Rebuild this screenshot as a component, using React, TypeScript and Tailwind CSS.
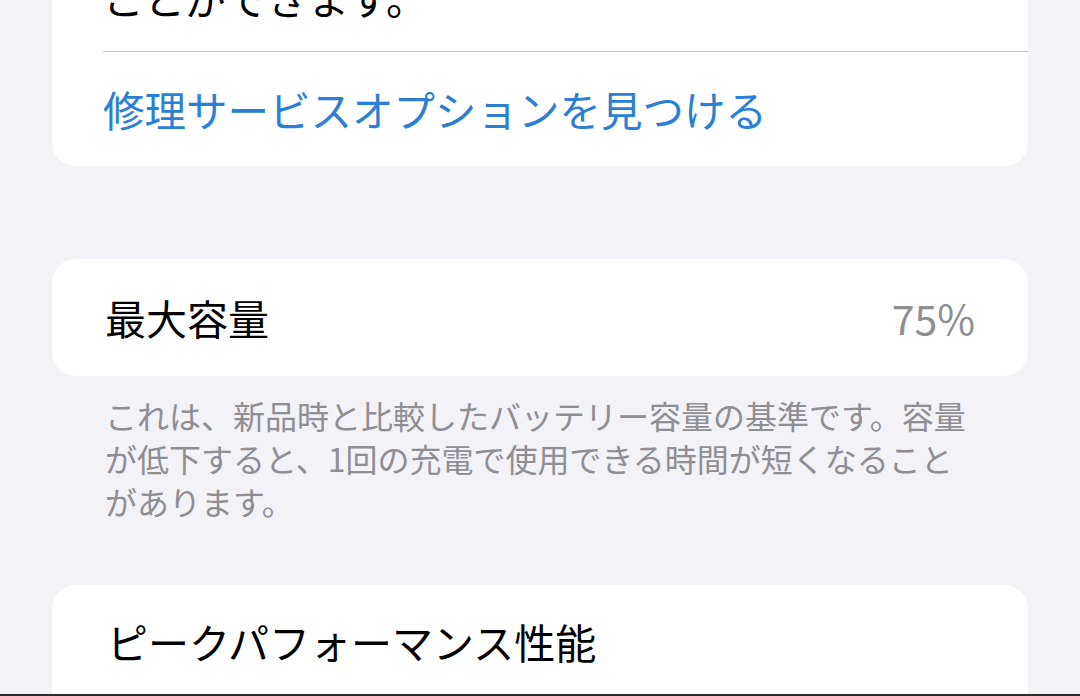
export default function App() {
  return (
    <div
      className="w-[1080px] h-[696px] overflow-hidden bg-[#f2f2f7] flex flex-col"
      style={{ fontFamily: '"Noto Sans CJK JP", "Noto Sans", sans-serif' }}
    >
      {/* Repair card (scrolled, top cut off) */}
      <div className="mx-[52px] mt-[-27px] bg-white rounded-[24px] shrink-0">
        <div className="pl-[51px] pb-[30px] text-[41px] leading-[48px] text-black">ことができます。</div>
        <div className="ml-[51px] h-px bg-[#c6c6c8]"></div>
        <div className="pl-[51px] h-[114px] flex items-center text-[41.5px] text-[#2b7fd4]">
          修理サービスオプションを見つける
        </div>
      </div>

      {/* Maximum capacity */}
      <div className="mx-[52px] mt-[93px] h-[117px] bg-white rounded-[24px] px-[53px] flex items-center justify-between shrink-0">
        <span className="text-[41px] text-black">最大容量</span>
        <span className="text-[41px] text-[#8e8e93]">75%</span>
      </div>
      <p className="ml-[105px] w-[870px] mt-[18px] text-[32px] leading-[43px] text-[#8e8e93] shrink-0">
        これは、新品時と比較したバッテリー容量の基準です。容量が低下すると、1回の充電で使用できる時間が短くなることがあります。
      </p>

      {/* Peak performance */}
      <div className="mx-[52px] mt-[62px] flex-1 bg-white rounded-t-[24px] px-[55px] pt-[32px]">
        <span className="text-[41px] leading-[48px] text-black">ピークパフォーマンス性能</span>
      </div>
      <div className="h-[2px] bg-[#2b2b2b] shrink-0"></div>
    </div>
  );
}
